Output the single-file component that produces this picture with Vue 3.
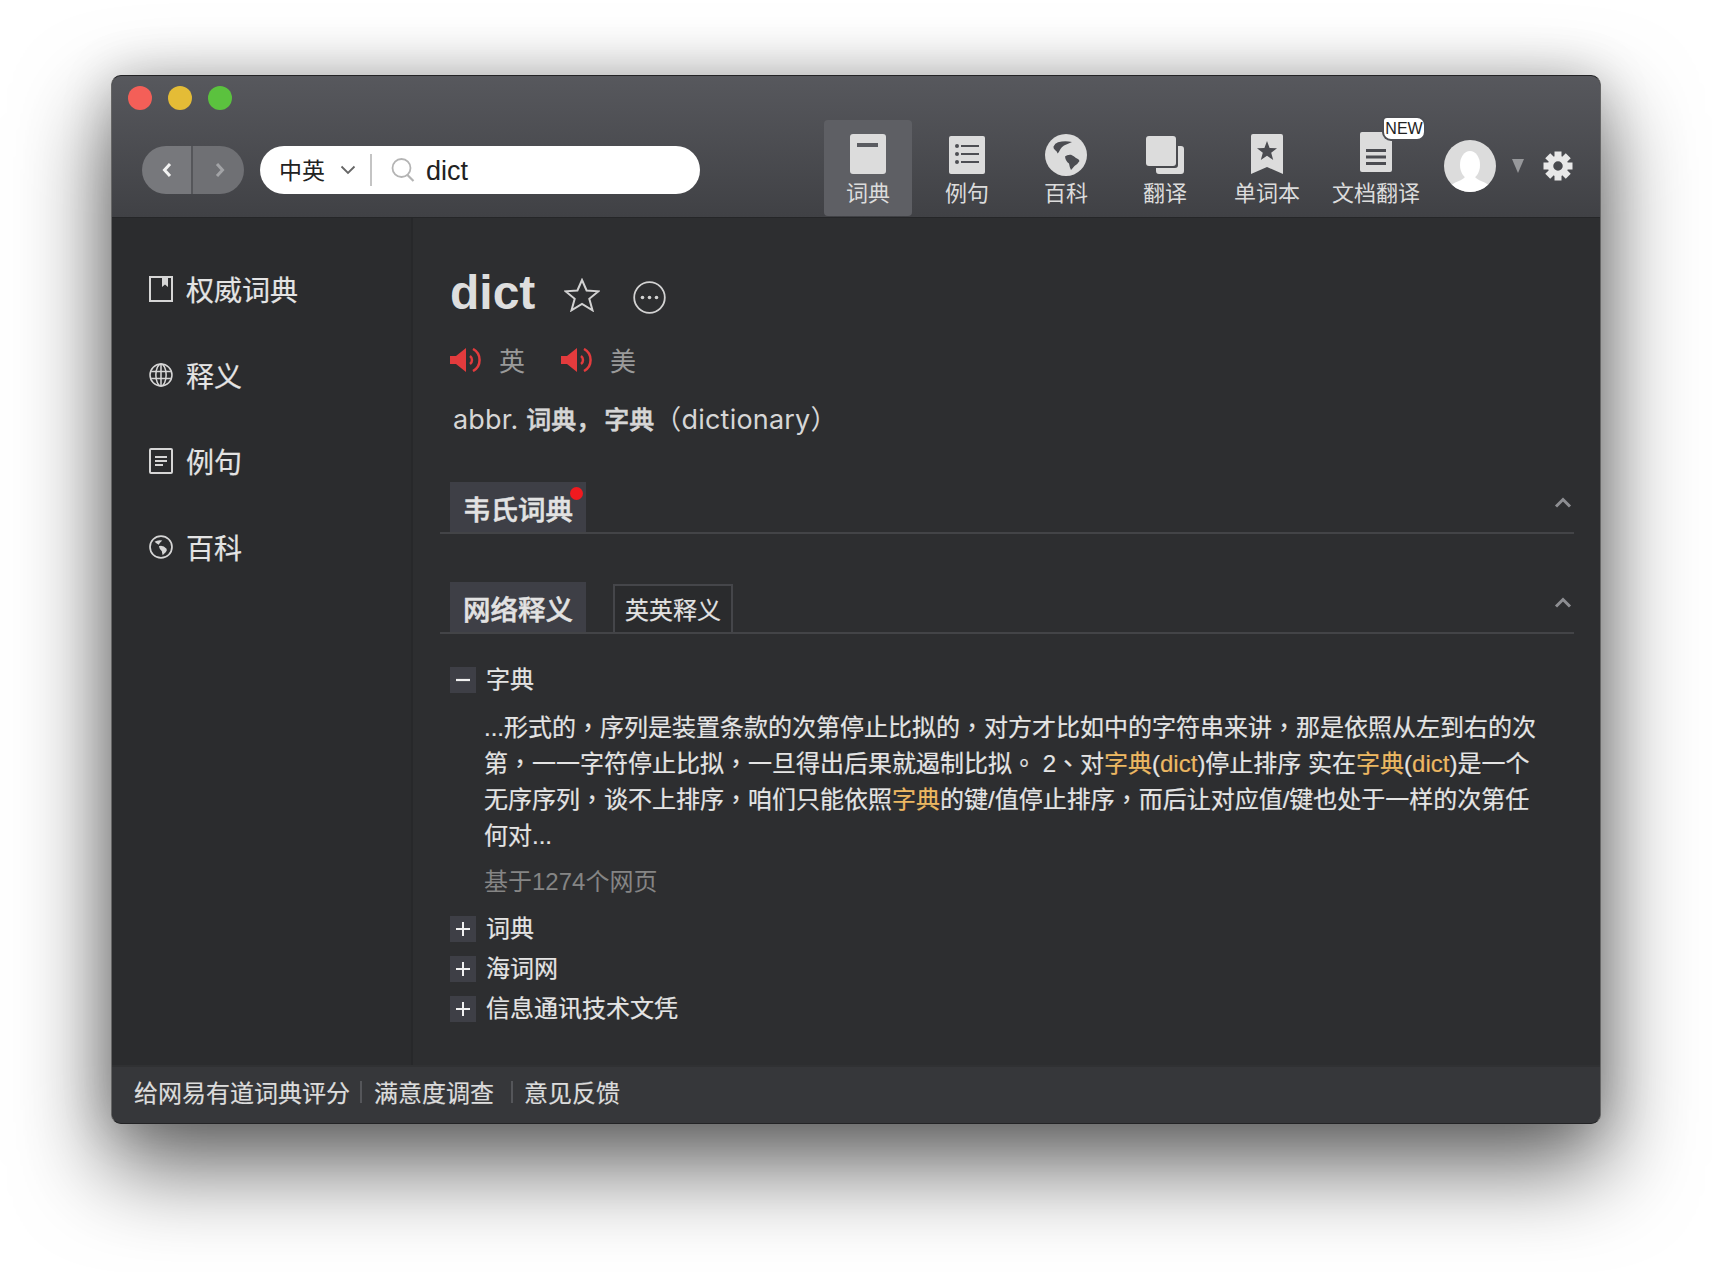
<script setup>
const tools = [
  { key: 'dict', label: '词典', active: true },
  { key: 'list', label: '例句' },
  { key: 'globe', label: '百科' },
  { key: 'trans', label: '翻译' },
  { key: 'words', label: '单词本' },
  { key: 'doc', label: '文档翻译' },
]

const sideItems = [
  { key: 'book', label: '权威词典' },
  { key: 'web', label: '释义' },
  { key: 'note', label: '例句' },
  { key: 'earth', label: '百科' },
]

const rawLines = [
  '...形式的，序列是装置条款的次第停止比拟的，对方才比如中的字符串来讲，那是依照从左到右的次',
  '第，一一字符停止比拟，一旦得出后果就遏制比拟。 2、对[字典]([dict])停止排序 实在[字典]([dict])是一个',
  '无序序列，谈不上排序，咱们只能依照[字典]的键/值停止排序，而后让对应值/键也处于一样的次第任',
  '何对...',
]

// split a line into plain text, highlighted words and punctuation
const lines = rawLines.map((line) =>
  line.split(/(\[[^\]]+\]|[，。、])/).filter(Boolean).map((part) => {
    if (part.startsWith('[')) return { text: part.slice(1, -1), cls: 'hl' }
    if ('，。、'.includes(part)) return { text: part, cls: 'punct' }
    return { text: part, cls: '' }
  }),
)

const teeth = [0, 45, 90, 135, 180, 225, 270, 315]
const collapsed = ['词典', '海词网', '信息通讯技术文凭']
</script>

<template>
  <div class="page">
    <div class="window">
      <header class="titlebar">
        <div class="lights">
          <span class="light light--red"></span>
          <span class="light light--yellow"></span>
          <span class="light light--green"></span>
        </div>
        <div class="bar">
          <div class="nav">
            <span class="nav__btn">
              <svg width="12" height="18" viewBox="0 0 12 18"><path d="M9 3 3.5 9 9 15" fill="none" stroke="#f2f2f2" stroke-width="3" /></svg>
            </span>
            <span class="nav__btn nav__btn--off">
              <svg width="12" height="18" viewBox="0 0 12 18"><path d="M3 3l5.5 6L3 15" fill="none" stroke="#a2a3a6" stroke-width="3" /></svg>
            </span>
          </div>
          <div class="search">
            <span class="search__lang">中英</span>
            <svg class="search__caret" width="16" height="10" viewBox="0 0 16 10"><path d="M1.5 1.5 8 8l6.5-6.5" fill="none" stroke="#666" stroke-width="1.8" /></svg>
            <span class="search__sep"></span>
            <svg class="search__icon" width="24" height="26" viewBox="0 0 24 26">
              <circle cx="10.5" cy="11" r="9" fill="none" stroke="#b4b4b4" stroke-width="1.8" />
              <path d="M16.5 18l6 6" stroke="#b4b4b4" stroke-width="2.2" />
            </svg>
            <span class="search__text">dict</span>
          </div>

          <nav class="tools">
            <div
              v-for="tool in tools"
              :key="tool.key"
              class="tool"
              :class="[`tool--${tool.key}`, { 'tool--active': tool.active }]"
            >
              <span class="tool__icon">
                <svg v-if="tool.key === 'dict'" width="36" height="40" viewBox="0 0 36 40">
                  <rect width="36" height="40" rx="3" fill="#dcdcdc" />
                  <rect x="7" y="9" width="21" height="4" fill="#5b5c61" />
                </svg>
                <svg v-else-if="tool.key === 'list'" width="36" height="38" viewBox="0 0 36 38">
                  <rect width="36" height="38" rx="2" fill="#dcdcdc" />
                  <g fill="#4d4e53">
                    <circle cx="8" cy="10" r="2" /><circle cx="8" cy="18" r="2" /><circle cx="8" cy="26" r="2" />
                    <rect x="12" y="9" width="18" height="2" /><rect x="12" y="17" width="18" height="2" /><rect x="12" y="25" width="18" height="2" />
                  </g>
                </svg>
                <svg v-else-if="tool.key === 'globe'" width="42" height="42" viewBox="0 0 42 42">
                  <circle cx="21" cy="21" r="21" fill="#dcdcdc" />
                  <path d="M8.5 12.5Q10 9 13 8.2 20 6.5 27 8 22 10 19 11.5 16.5 13 15.5 15 14 18 12.7 19.5 12 17 10 16 8 14 8.5 12.5z" fill="#4b4c51" />
                  <path d="M20 22.5Q22 20.5 26 20.8 29 22 31 24 34 25 34.5 27 32 31 29.5 32 27 35 26 36 24.5 33 24 29.5 20.5 27 20 22.5z" fill="#4b4c51" />
                </svg>
                <svg v-else-if="tool.key === 'trans'" width="38" height="38" viewBox="0 0 38 38">
                  <rect width="30" height="30" rx="3" fill="#dcdcdc" />
                  <path d="M32 10h3a3 3 0 0 1 3 3v22a3 3 0 0 1-3 3H13a3 3 0 0 1-3-3v-3h19a3 3 0 0 0 3-3z" fill="#dcdcdc" />
                </svg>
                <svg v-else-if="tool.key === 'words'" width="32" height="40" viewBox="0 0 32 40">
                  <path d="M0 2a2 2 0 0 1 2-2h28a2 2 0 0 1 2 2v38l-16-7L0 40z" fill="#dcdcdc" />
                  <polygon points="16,7 18.6,14 26,14.3 20.2,18.8 22.2,26 16,21.8 9.8,26 11.8,18.8 6,14.3 13.4,14" fill="#4b4c51" />
                </svg>
                <svg v-else width="32" height="40" viewBox="0 0 32 40">
                  <rect width="32" height="40" rx="2" fill="#dcdcdc" />
                  <rect x="6" y="17" width="20" height="3" fill="#4b4c51" />
                  <rect x="6" y="23.500" width="20" height="3" fill="#4b4c51" />
                  <rect x="6" y="30" width="20" height="3" fill="#4b4c51" />
                </svg>
                <span v-if="tool.key === 'doc'" class="tool__new">NEW</span>
              </span>
              <span class="tool__label">{{ tool.label }}</span>
            </div>
          </nav>

          <svg class="avatar" width="52" height="52" viewBox="0 0 52 52">
            <circle cx="26" cy="26" r="26" fill="#dcdcdc" />
            <ellipse cx="26" cy="25" rx="10" ry="14" fill="#fff" />
            <path d="M8 44.700C12 41 18 41 21 37h10c3 4 9 4 13 7.700A26 26 0 0 1 8 44.700z" fill="#fff" />
          </svg>
          <span class="caret"></span>
          <svg class="gear" width="30" height="30" viewBox="0 0 30 30">
            <rect v-for="a in teeth" :key="a" x="11.500" y="0.500" width="7" height="7.500" fill="#e8e8e8" :transform="`rotate(${a} 15 15)`" />
            <circle cx="15" cy="15" r="7.500" fill="none" stroke="#e8e8e8" stroke-width="5.500" />
          </svg>
        </div>
      </header>

      <div class="body">
        <aside class="side">
          <div v-for="item in sideItems" :key="item.key" class="side__item">
            <span class="side__icon">
              <svg v-if="item.key === 'book'" width="24" height="28" viewBox="0 0 24 28">
                <path d="M1 2h22v24H1z" fill="none" stroke="#d6d6d6" stroke-width="2" />
                <path d="M13 2h6v10l-3-2.500-3 2.500z" fill="#d6d6d6" />
              </svg>
              <svg v-else-if="item.key === 'web'" width="28" height="28" viewBox="0 0 28 28">
                <g fill="none" stroke="#d6d6d6" stroke-width="1.800">
                  <circle cx="14" cy="14" r="12.800" />
                  <ellipse cx="14" cy="14" rx="6" ry="12.800" />
                  <path d="M14 1v26M2.500 10h23M2.500 18h23" />
                </g>
              </svg>
              <svg v-else-if="item.key === 'note'" width="24" height="28" viewBox="0 0 24 28">
                <rect x="1" y="2" width="22" height="24" rx="1" fill="none" stroke="#d6d6d6" stroke-width="2" />
                <path d="M6 10h12M6 14h12M6 18h8" stroke="#d6d6d6" stroke-width="1.800" />
              </svg>
              <svg v-else width="28" height="28" viewBox="0 0 28 28">
                <circle cx="14" cy="14" r="12.800" fill="none" stroke="#d6d6d6" stroke-width="2" />
                <path d="M6.500 8Q10 5.500 15.500 6.500 12.500 9 11.500 11.500 9 10.500 6.500 8z" fill="#d6d6d6" />
                <path d="M11.500 13q5-1.500 9 3 1 2-1 4-2 2-3.500 3.500-1-3.500-1-4.500-3-3-3.500-6z" fill="#d6d6d6" />
              </svg>
            </span>
            <span>{{ item.label }}</span>
          </div>
        </aside>

        <main class="main">
          <div class="head">
            <h1 class="head__word">dict</h1>
            <svg class="head__star" width="36" height="34" viewBox="0 0 36 34">
              <polygon points="18,2 22.600,12.500 34.500,13.300 25.300,20.800 28.500,32.300 18,26 7.500,32.300 10.700,20.800 1.500,13.300 13.400,12.500" fill="none" stroke="#d2d2d2" stroke-width="2" stroke-linejoin="miter" />
            </svg>
            <svg class="head__more" width="33" height="33" viewBox="0 0 33 33">
              <circle cx="16.500" cy="16.500" r="15.300" fill="none" stroke="#d2d2d2" stroke-width="1.800" />
              <circle cx="9.500" cy="16.500" r="1.800" fill="#d2d2d2" /><circle cx="16.500" cy="16.500" r="1.800" fill="#d2d2d2" /><circle cx="23.500" cy="16.500" r="1.800" fill="#d2d2d2" />
            </svg>
          </div>

          <div class="pron">
            <template v-for="p in ['英', '美']" :key="p">
              <svg class="pron__icon" width="33" height="24" viewBox="0 0 33 24">
                <polygon points="0,8 6,8 16,0 16,24 6,16 0,16" fill="#e33b3d" />
                <path d="M20 8a5 5 0 0 1 0 8M23 1A12.500 12.500 0 0 1 23 23" fill="none" stroke="#e33b3d" stroke-width="2.500" />
              </svg>
              <span class="pron__label">{{ p }}</span>
            </template>
          </div>

          <p class="brief">abbr. <b>词典</b><b class="brief__gap">，</b><b>字典</b>（dictionary）</p>

          <section class="tabs tabs--first">
            <span class="tab">韦氏词典<i class="tab__dot"></i></span>
            <svg class="tabs__fold" width="18" height="11" viewBox="0 0 18 11"><path d="M2 9.500 9 2.500l7 7" fill="none" stroke="#8d8e92" stroke-width="3" /></svg>
          </section>

          <section class="tabs tabs--second">
            <span class="tab">网络释义</span>
            <span class="tab tab--plain">英英释义</span>
            <svg class="tabs__fold" width="18" height="11" viewBox="0 0 18 11"><path d="M2 9.500 9 2.500l7 7" fill="none" stroke="#8d8e92" stroke-width="3" /></svg>
          </section>

          <div class="entry entry--open">
            <span class="entry__box">
              <svg width="14" height="14" viewBox="0 0 14 14"><path d="M0 7h14" stroke="#f0f0f0" stroke-width="2.200" /></svg>
            </span>
            <span class="entry__text">字典</span>
          </div>

          <div class="detail">
            <div v-for="(line, i) in lines" :key="i" class="detail__line">
              <span v-for="(seg, j) in line" :key="j" :class="seg.cls">{{ seg.text }}</span>
            </div>
          </div>
          <div class="meta">基于1274个网页</div>

          <div class="collapsed">
            <div v-for="name in collapsed" :key="name" class="entry">
              <span class="entry__box">
                <svg width="14" height="14" viewBox="0 0 14 14"><path d="M0 7h14M7 0v14" stroke="#f0f0f0" stroke-width="2" /></svg>
              </span>
              <span class="entry__text">{{ name }}</span>
            </div>
          </div>
        </main>
      </div>

      <footer class="foot">
        <span class="foot__link">给网易有道词典评分</span>
        <span class="foot__sep foot__sep--a"></span>
        <span class="foot__link">满意度调查</span>
        <span class="foot__sep foot__sep--b"></span>
        <span class="foot__link">意见反馈</span>
      </footer>
    </div>
  </div>
</template>

<style>
html,
body {
  margin: 0;
  background: #fff;
}
</style>

<style scoped>
.page {
  width: 1712px;
  height: 1272px;
  padding: 75px 0 0 111px;
  box-sizing: border-box;
  overflow: hidden;
  font-family: "Liberation Sans", "Noto Sans CJK SC", sans-serif;
  color: #dcdcdc;
}

.window {
  width: 1490px;
  height: 1049px;
  box-sizing: border-box;
  display: flex;
  flex-direction: column;
  border: 1px solid #232325;
  border-left-color: #666;
  border-right-color: #666;
  border-radius: 10px;
  overflow: hidden;
  background: #2d2e30;
  box-shadow: 0 40px 90px 4px rgba(0, 0, 0, 0.6), 0 0 50px rgba(0, 0, 0, 0.18);
}

/* title bar */
.titlebar {
  height: 142px;
  flex: none;
  background: linear-gradient(#57585d, #404145);
  border-bottom: 1px solid #252628;
  box-sizing: border-box;
}

.lights {
  height: 44px;
  box-sizing: border-box;
  padding: 10px 0 0 16px;
  display: flex;
  gap: 16px;
}

.light {
  width: 24px;
  height: 24px;
  border-radius: 50%;
}

.light--red { background: #f45f58; }
.light--yellow { background: #e4bc36; }
.light--green { background: #5bc23e; }

.bar {
  display: flex;
  align-items: flex-start;
  padding-left: 30px;
}

.nav {
  margin-top: 26px;
  width: 102px;
  height: 48px;
  display: flex;
  border-radius: 24px;
  overflow: hidden;
  flex: none;
}

.nav__btn {
  flex: 1;
  display: flex;
  align-items: center;
  justify-content: center;
  background: #77787c;
}

.nav__btn--off {
  background: #6f7074;
  border-left: 2px solid #55565a;
  padding-left: 2px;
}

.search {
  margin: 26px 0 0 16px;
  width: 440px;
  height: 48px;
  flex: none;
  display: flex;
  align-items: center;
  background: #fff;
  border-radius: 24px;
  color: #222;
  box-sizing: border-box;
  padding-left: 19px;
}

.search__lang {
  font-size: 23px;
  padding-bottom: 2px;
}

.search__caret {
  margin: 0 14px 0 15px;
}

.search__sep {
  width: 2px;
  height: 32px;
  background: #c4c4c4;
}

.search__icon {
  margin-left: 19px;
}

.search__text {
  margin-left: 11px;
  font-size: 27px;
  padding-top: 2px;
}

.tools {
  margin-left: 124px;
  display: flex;
  gap: 11px;
}

.tool {
  position: relative;
  width: 88px;
  height: 96px;
  display: flex;
  flex-direction: column;
  align-items: center;
  border-radius: 4px;
  color: #dcdcdc;
  font-size: 22px;
}

.tool--active {
  background: #5e5f64;
}

.tool--words {
  margin-left: 1px;
  width: 92px;
}

.tool--doc {
  margin-left: 4px;
  width: 96px;
}

.tool__icon {
  position: relative;
  height: 61px;
  padding-top: 14px;
  box-sizing: border-box;
  display: block;
  line-height: 0;
}

.tool--doc .tool__icon {
  padding-top: 12px;
}

.tool--list .tool__icon,
.tool--trans .tool__icon {
  padding-top: 16px;
}

.tool__new {
  position: absolute;
  left: 24px;
  top: -2px;
  width: 40px;
  height: 21px;
  box-sizing: content-box;
  border-radius: 3px 7px 7px 7px;
  background: #fff;
  box-shadow: 0 0 0 2px #4d4e53;
  color: #222;
  font-size: 16px;
  line-height: 21px;
  text-align: center;
}

.tool__label {
  line-height: 26px;
  white-space: nowrap;
}

.avatar {
  margin: 20px 0 0 20px;
  flex: none;
}

.caret {
  margin: 39px 0 0 16px;
  width: 0;
  height: 0;
  border-left: 6.5px solid transparent;
  border-right: 6.5px solid transparent;
  border-top: 14px solid #97989b;
}

.gear {
  margin: 31px 0 0 19px;
  flex: none;
}

/* body */
.body {
  flex: 1;
  display: flex;
  min-height: 0;
}

.side {
  width: 301px;
  flex: none;
  box-sizing: border-box;
  padding-top: 28px;
  background: #2b2c2e;
  border-right: 2px solid #27282a;
  font-size: 28px;
  color: #e4e4e4;
  -webkit-text-stroke: 0.2px #e4e4e4;
}

.side__item {
  height: 86px;
  display: flex;
  align-items: center;
  padding-left: 37px;
}

.side__icon {
  width: 24px;
  margin-right: 13px;
  display: flex;
  justify-content: center;
  line-height: 0;
}

.main {
  flex: 1;
  min-width: 0;
  padding: 46px 26px 0 27px;
  position: relative;
}

.head {
  padding-left: 10px;
  height: 56px;
  display: flex;
  align-items: center;
}

.head__word {
  margin: 0;
  font-size: 48px;
  line-height: 58px;
  padding-top: 2px;
  font-weight: 700;
  color: #dedede;
}

.head__star {
  margin: 6px 0 0 29px;
}

.head__more {
  margin: 10px 0 0 33px;
}

.pron {
  margin-top: 25px;
  padding-left: 10px;
  height: 30px;
  display: flex;
  align-items: center;
  font-size: 26px;
  color: #9a9a9a;
}

.pron__label {
  margin: 0 36px 0 16px;
  padding-bottom: 2px;
}

.brief {
  margin: 25px 0 0;
  padding-left: 13px;
  font-family: Inter, "Noto Sans CJK SC", sans-serif;
  font-size: 27px;
  letter-spacing: 0.2px;
  line-height: 36px;
  color: #d6d6d6;
}

.brief b {
  font-family: "Noto Sans CJK SC", sans-serif;
  font-weight: 500;
  font-size: 25px;
  letter-spacing: 0;
  -webkit-text-stroke: 0.5px #d6d6d6;
}

.brief__gap {
  margin-right: 3px;
}

.tabs {
  display: flex;
  align-items: flex-end;
  padding-left: 10px;
  border-bottom: 2px solid #434447;
}

.tabs--first {
  margin-top: 44px;
}

.tabs--second {
  margin-top: 48px;
}

.tab {
  position: relative;
  height: 50px;
  width: 136px;
  text-align: center;
  background: #3e3f46;
  font-size: 27.500px;
  font-weight: 500;
  line-height: 57px;
  color: #e2e2e2;
  -webkit-text-stroke: 0.5px #e2e2e2;
}

.tab__dot {
  position: absolute;
  right: 3px;
  top: 5px;
  width: 13px;
  height: 13px;
  border-radius: 50%;
  background: #f01a1f;
}

.tab--plain {
  margin-left: 27px;
  width: 120px;
  height: 48px;
  box-sizing: border-box;
  border: 2px solid #45464a;
  border-bottom: 0;
  background: #2a2b2d;
  font-size: 24px;
  font-weight: 400;
  line-height: 50px;
  -webkit-text-stroke: 0.2px #e2e2e2;
}

.tabs__fold {
  margin: 15px 2px 0 auto;
  align-self: flex-start;
}

.entry {
  display: flex;
  align-items: center;
  height: 26px;
  padding-left: 10px;
  font-size: 24px;
  color: #e4e4e4;
  -webkit-text-stroke: 0.2px #e4e4e4;
}

.entry--open {
  margin-top: 33px;
}

.entry__box {
  width: 26px;
  height: 26px;
  margin-right: 10px;
  background: #3e3f46;
  display: flex;
  align-items: center;
  justify-content: center;
  flex: none;
}

.entry__text {
  padding-bottom: 6px;
}

.detail {
  margin-top: 17px;
  padding-left: 44px;
  font-size: 24px;
  line-height: 36px;
  color: #e4e4e4;
  -webkit-text-stroke: 0.2px #e4e4e4;
}

.detail__line {
  white-space: nowrap;
}

.hl {
  color: #ecb862;
  -webkit-text-stroke: 0.2px #ecb862;
}

.punct {
  font-family: "Noto Sans CJK TC", sans-serif;
  line-height: 0;
}

.meta {
  margin-top: 10px;
  padding-left: 44px;
  font-size: 24px;
  line-height: 36px;
  color: #858585;
}

.collapsed {
  margin-top: 16px;
  display: flex;
  flex-direction: column;
  gap: 14px;
}

/* footer */
.foot {
  height: 58px;
  flex: none;
  box-sizing: border-box;
  display: flex;
  align-items: center;
  padding: 0 0 8px 22px;
  background: #36373a;
  border-top: 2px solid #303133;
  font-size: 24px;
  color: #dcdcdc;
  -webkit-text-stroke: 0.2px #dcdcdc;
}

.foot__sep {
  width: 2px;
  height: 22px;
  margin-top: 2px;
  background: #55565a;
}

.foot__sep--a {
  margin: 2px 12px 0 10px;
}

.foot__sep--b {
  margin: 2px 11px 0 17px;
}
</style>
